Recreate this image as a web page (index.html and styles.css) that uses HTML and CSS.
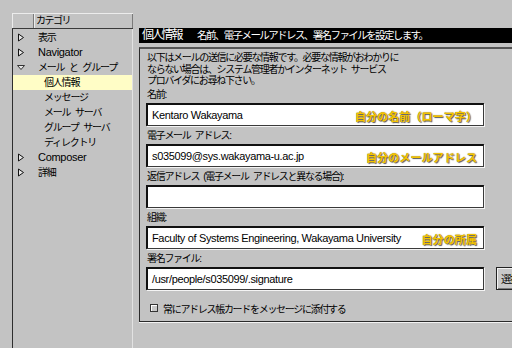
FILE: index.html
```html
<!DOCTYPE html>
<html lang="ja">
<head>
  <meta charset="UTF-8">
  <title>設定 - 個人情報</title>
  <link rel="stylesheet" href="styles.css">
</head>
<body>
  <div class="window">
    <aside class="category">
      <div class="cat-head">
        <span class="cat-corner"></span>
        <span class="cat-title">カテゴリ</span>
      </div>
      <ul class="tree">
        <li class="node"><svg class="twisty" width="8" height="9" viewBox="0 0 8 9"><polygon points="1.5,1 6.5,4.5 1.5,8" fill="#e6e6e6" stroke="#111" stroke-width="1"/></svg>表示</li>
        <li class="node latin"><svg class="twisty" width="8" height="9" viewBox="0 0 8 9"><polygon points="1.5,1 6.5,4.5 1.5,8" fill="#e6e6e6" stroke="#111" stroke-width="1"/></svg>Navigator</li>
        <li class="node"><svg class="twisty" width="8" height="9" viewBox="0 0 8 9"><polygon points="0.5,2.5 7.5,2.5 4,6.5" fill="#e6e6e6" stroke="#333" stroke-width="1"/></svg>メール と グループ</li>
        <li class="leaf selected">個人情報</li>
        <li class="leaf">メッセージ</li>
        <li class="leaf">メール サーバ</li>
        <li class="leaf">グループ サーバ</li>
        <li class="leaf">ディレクトリ</li>
        <li class="node latin"><svg class="twisty" width="8" height="9" viewBox="0 0 8 9"><polygon points="1.5,1 6.5,4.5 1.5,8" fill="#e6e6e6" stroke="#111" stroke-width="1"/></svg>Composer</li>
        <li class="node"><svg class="twisty" width="8" height="9" viewBox="0 0 8 9"><polygon points="1.5,1 6.5,4.5 1.5,8" fill="#e6e6e6" stroke="#111" stroke-width="1"/></svg>詳細</li>
      </ul>
    </aside>

    <main class="pane">
      <div class="pane-title">
        <span class="pane-name">個人情報</span>
        <span class="pane-desc">名前、電子メールアドレス、署名ファイルを設定します。</span>
      </div>

      <div class="pane-body">
        <p class="intro">以下はメールの送信に必要な情報です。必要な情報がおわかりに<br>ならない場合は、システム管理者かインターネット サービス<br>プロバイダにお尋ね下さい。</p>

        <div class="field-label">名前:</div>
        <div class="field">
          <span class="value">Kentaro Wakayama</span>
          <span class="note">自分の名前（ローマ字）</span>
        </div>

        <div class="field-label">電子メール アドレス:</div>
        <div class="field">
          <span class="value">s035099@sys.wakayama-u.ac.jp</span>
          <span class="note">自分のメールアドレス</span>
        </div>

        <div class="field-label">返信アドレス (電子メール アドレスと異なる場合):</div>
        <div class="field"></div>

        <div class="field-label">組織:</div>
        <div class="field">
          <span class="value">Faculty of Systems Engineering, Wakayama University</span>
          <span class="note">自分の所属</span>
        </div>

        <div class="field-label">署名ファイル:</div>
        <div class="field-row">
          <div class="field">
            <span class="value">/usr/people/s035099/.signature</span>
          </div>
          <button class="choose">選択...</button>
        </div>

        <div class="check">
          <span class="check-box"></span>
          <span>常にアドレス帳カードをメッセージに添付する</span>
        </div>
      </div>
    </main>
  </div>
</body>
</html>
```

FILE: styles.css
```css
body {
  margin: 0;
  width: 512px;
  height: 348px;
  overflow: hidden;
  background-color: #c3c3c3;
  font-family: "Liberation Sans", "Noto Sans CJK JP", sans-serif;
  font-size: 10px;
  color: #000;
}

.window {
  display: flex;
  align-items: flex-start;
  height: 348px;
  padding: 13px 0 0 12px;
  box-sizing: border-box;
}

/* left side: category tree */

.category {
  width: 121px;
  height: 335px;
  display: flex;
  flex-direction: column;
  flex-shrink: 0;
}

.cat-head {
  display: flex;
  height: 16px;
  box-sizing: border-box;
  border-top: 1px solid #ececec;
  border-bottom: 1px solid #3a3a3a;
}

.cat-corner {
  width: 20px;
  border-left: 1px solid #ececec;
  border-right: 1px solid #7a7a7a;
}

.cat-title {
  flex-grow: 1;
  padding-left: 1px;
  line-height: 14px;
  border-left: 1px solid #ececec;
  border-right: 1px solid #7a7a7a;
  letter-spacing: -1.5px;
}

.tree {
  list-style: none;
  margin: 0;
  padding: 1px 0 0 0;
  flex-grow: 1;
  border-left: 1px solid #2e2e2e;
  border-right: 1px solid #e2e2e2;
}

.tree li {
  height: 15px;
  line-height: 15px;
  white-space: nowrap;
  letter-spacing: -1.2px;
  word-spacing: 3px;
}

.tree .latin {
  font-size: 11px;
  letter-spacing: -0.3px;
  word-spacing: 0;
}

.node {
  display: flex;
  align-items: center;
  padding-left: 4px;
}

.twisty {
  margin-right: 13px;
  flex-shrink: 0;
}

.leaf {
  padding-left: 31px;
}

.selected {
  background-color: #fffdc6;
}

/* right side: settings pane */

.pane {
  width: 400px;
  margin: 15px 0 0 6px;
  flex-shrink: 0;
}

.pane-title {
  height: 15px;
  line-height: 15px;
  padding-left: 3px;
  background-color: #000;
  color: #fff;
  white-space: nowrap;
}

.pane-name {
  font-size: 12px;
  letter-spacing: -2.2px;
  margin-right: 13px;
}

.pane-desc {
  font-size: 10.5px;
  letter-spacing: -1.6px;
}

.pane-body {
  height: 275px;
  margin-top: 4px;
  padding: 3px 0 0 6px;
  box-sizing: border-box;
  border: 1px solid #2a2a2a;
  border-top-width: 2px;
  border-top-color: #555;
  box-shadow: 0 1px 0 #f2f2f2;
}

.intro {
  margin: 0 0 0 1px;
  line-height: 11.5px;
  letter-spacing: -1.3px;
  word-spacing: 2.5px;
  white-space: nowrap;
}

.field-label {
  height: 16px;
  line-height: 16px;
  padding-left: 1px;
  letter-spacing: -1.3px;
  word-spacing: 2.5px;
  white-space: nowrap;
}

.field {
  position: relative;
  flex-shrink: 0;
  width: 338px;
  height: 23px;
  margin-bottom: 2px;
  box-sizing: border-box;
  padding-left: 4px;
  background-color: #fff;
  border: 1px solid #3a3a3a;
  border-top: 2px solid #111;
  border-left: 2px solid #111;
  box-shadow: 1px 1px 0 #f4f4f4;
  display: flex;
  align-items: center;
}

.value {
  font-size: 11px;
  letter-spacing: -0.35px;
  white-space: nowrap;
}

.note {
  position: absolute;
  right: 6px;
  top: 3px;
  line-height: 16px;
  font-family: "Noto Sans CJK JP", sans-serif;
  font-size: 11px;
  font-weight: bold;
  letter-spacing: 0.1px;
  color: #f4c300;
  text-shadow: 1px 1px 1px #555, 0 0 1px #8a7000;
  white-space: nowrap;
}

.field-row {
  display: flex;
  gap: 12px;
}

.choose {
  flex-shrink: 0;
  width: 60px;
  height: 23px;
  padding: 0 0 0 4px;
  text-align: left;
  font-family: inherit;
  font-size: 10.5px;
  letter-spacing: -1.5px;
  background-color: #c8c8c8;
  border: 1px solid #222;
  box-shadow: inset 1px 1px 0 #f4f4f4, inset -1px -1px 0 #7a7a7a;
}

.check {
  display: flex;
  align-items: center;
  margin-top: 9px;
  padding-left: 4px;
  letter-spacing: -1.3px;
  white-space: nowrap;
}

.check-box {
  width: 8px;
  height: 8px;
  margin-right: 5px;
  box-sizing: border-box;
  border: 1px solid #333;
  background-color: #c8c8c8;
  box-shadow: inset 1px 1px 0 #fff;
}
```
